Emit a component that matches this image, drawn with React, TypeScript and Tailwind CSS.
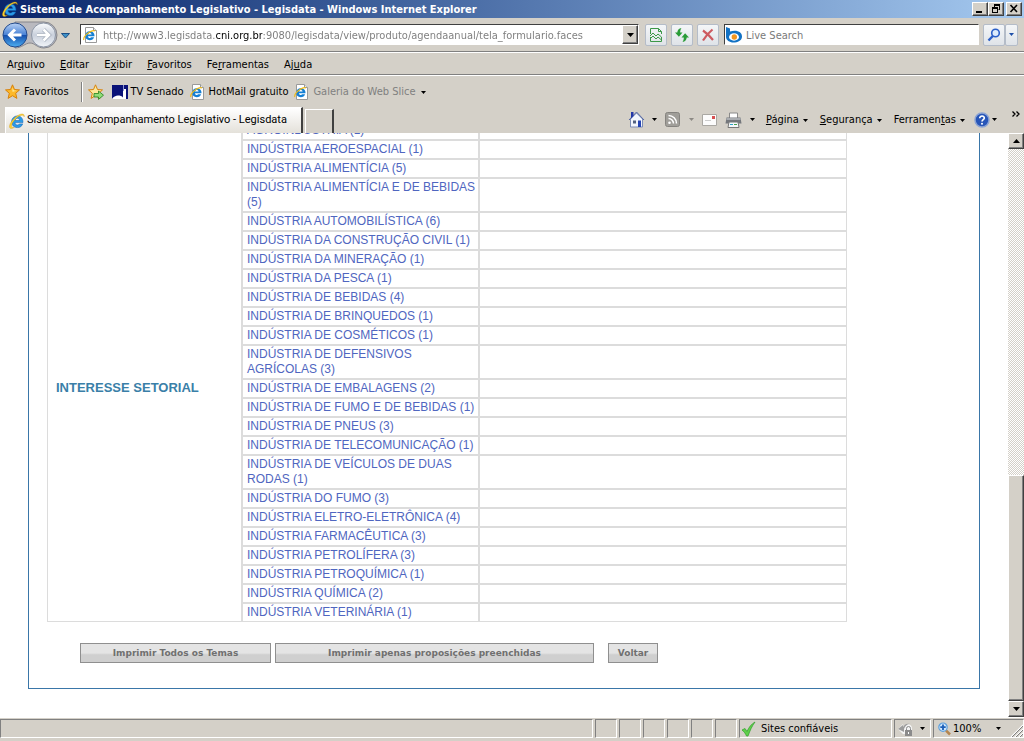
import type { ReactNode } from "react";

const sectors = [
  "AGROINDÚSTRIA (1)",
  "INDÚSTRIA AEROESPACIAL (1)",
  "INDÚSTRIA ALIMENTÍCIA (5)",
  "INDÚSTRIA ALIMENTÍCIA E DE BEBIDAS (5)",
  "INDÚSTRIA AUTOMOBILÍSTICA (6)",
  "INDÚSTRIA DA CONSTRUÇÃO CIVIL (1)",
  "INDÚSTRIA DA MINERAÇÃO (1)",
  "INDÚSTRIA DA PESCA (1)",
  "INDÚSTRIA DE BEBIDAS (4)",
  "INDÚSTRIA DE BRINQUEDOS (1)",
  "INDÚSTRIA DE COSMÉTICOS (1)",
  "INDÚSTRIA DE DEFENSIVOS AGRÍCOLAS (3)",
  "INDÚSTRIA DE EMBALAGENS (2)",
  "INDÚSTRIA DE FUMO E DE BEBIDAS (1)",
  "INDÚSTRIA DE PNEUS (3)",
  "INDÚSTRIA DE TELECOMUNICAÇÃO (1)",
  "INDÚSTRIA DE VEÍCULOS DE DUAS RODAS (1)",
  "INDÚSTRIA DO FUMO (3)",
  "INDÚSTRIA ELETRO-ELETRÔNICA (4)",
  "INDÚSTRIA FARMACÊUTICA (3)",
  "INDÚSTRIA PETROLÍFERA (3)",
  "INDÚSTRIA PETROQUÍMICA (1)",
  "INDÚSTRIA QUÍMICA (2)",
  "INDÚSTRIA VETERINÁRIA (1)",
];

const raised =
  "border border-t-white border-l-white border-r-[#404040] border-b-[#404040] bg-[#d4d0c8] shadow-[inset_-1px_-1px_0_#808080]";
const toolButton =
  "flex h-[22px] w-[22px] items-center justify-center rounded-[2px] border border-[#b4bcc8] bg-linear-to-b from-[#f4f6f8] to-[#dfe3e8]";
const pageButton =
  "h-5 border border-[#8f8f8f] bg-linear-to-b from-[#e4e4e4] from-50% to-[#cfcfcf] to-60% text-center font-['DejaVu_Sans',sans-serif] text-[9px] leading-[16px] font-bold text-[#707070]";

function IELogo({ size = 16 }: { size?: number }) {
  return (
    <svg width={size} height={size} viewBox="0 0 16 16" className="shrink-0" aria-hidden="true">
      <path
        d="M14 9.600H6c.1 1.600 1 2.400 2.400 2.400.9 0 1.600-.4 2-1.100h3.300C12.900 13.300 11 14.600 8.300 14.600 5 14.600 2.600 12.200 2.600 8.800 2.600 5.300 5.100 2.900 8.400 2.900c3.500 0 5.700 2.400 5.600 6.700zM6.100 7.500h4.500C10.400 6.100 9.600 5.300 8.400 5.300S6.300 6.100 6.100 7.500z"
        fill="#2b9be8"
        stroke="#0d5cae"
        strokeWidth=".5"
      />
      <path
        d="M15.200 3.800C15.800.9 13.200.2 9.800 1.900 5 4.300.9 9.700.5 13.100c-.3 3 2.200 2.900 5 1.200-2.300.6-3.300-.3-2.900-2.100C3.200 9.200 6.900 5 10.400 3.100c2.300-1.200 4.100-1.100 4.800.7z"
        fill="#fbd02e"
        stroke="#c88a00"
        strokeWidth=".3"
      />
    </svg>
  );
}

function IEPage() {
  return (
    <svg width="16" height="16" viewBox="0 0 16 16" className="shrink-0" aria-hidden="true">
      <path d="M2.500.5h8l3 3v12h-11z" fill="#fff" stroke="#9a9a9a" />
      <path d="M10.500.5v3h3" fill="#e8e8e8" stroke="#9a9a9a" />
      <path
        d="M11.500 9.200H5c.1 1.200.7 1.800 1.700 1.800.7 0 1.200-.3 1.500-.8h2.900c-.6 1.900-2.100 3-4.400 3-2.700 0-4.500-1.800-4.500-4.400S4 4.200 6.700 4.200C9.600 4.200 11.600 6 11.500 9.200zM5 7.500h3.600C8.500 6.500 7.700 6 6.800 6S5.200 6.500 5 7.500z"
        fill="#147fd4"
      />
      <path d="M11.800 4.200C11.200 2.800 8 4 5.300 6 2.200 8.300.3 11.200.8 13" fill="none" stroke="#eebb1c" strokeWidth="1.200" />
    </svg>
  );
}

function Caret({ light = false, className = "" }: { light?: boolean; className?: string }) {
  return (
    <svg width="5" height="3" viewBox="0 0 5 3" className={`shrink-0 ${className}`} aria-hidden="true">
      <path d="M0 0h5L2.500 3z" fill={light ? "#8c8984" : "#000"} />
    </svg>
  );
}

function Star({ add = false }: { add?: boolean }) {
  return (
    <svg width="16" height="16" viewBox="0 0 16 16" className="shrink-0" aria-hidden="true">
      <path
        d="M7.500.8l2 4.700 5 .4-3.800 3.400 1.200 5.100-4.400-2.700-4.400 2.700 1.200-5.100L.5 5.900l5-.4z"
        fill={add ? "#fbe89a" : "#fdb92a"}
        stroke="#d8820c"
      />
      {!add && <path d="M7.500 3.500l1.200 3 3 .3-4.200 1z" fill="#fff0a8" />}
      {add && <path d="M6 9.500h4.500V7l5 4.200-5 4.200V13H6z" fill="#8fdd78" stroke="#23801c" strokeWidth=".8" />}
    </svg>
  );
}

function TitleBar() {
  return (
    <header className="flex h-[18px] shrink-0 items-center bg-linear-to-r from-[#0a246a] to-[#a6caf0] pr-[2px] pl-[2px]">
      <IELogo />
      <h1 className="ml-[2px] flex-1 truncate pt-[2px] text-[11px] leading-[14px] font-bold text-white">
        Sistema de Acompanhamento Legislativo - Legisdata - Windows Internet Explorer
      </h1>
      <button aria-label="Minimizar" className={`flex h-[14px] w-4 justify-center ${raised}`}>
        <svg width="12" height="12" viewBox="0 0 12 12"><path d="M2 8h6v2H2z" /></svg>
      </button>
      <button aria-label="Restaurar" className={`flex h-[14px] w-4 justify-center ${raised}`}>
        <svg width="12" height="12" viewBox="0 0 12 12">
          <path d="M4 1h6v6H8.500V6H9V3H5v1H4zM2 4h6v6H2zM3 6v3h4V6z" fillRule="evenodd" />
        </svg>
      </button>
      <button aria-label="Fechar" className={`ml-[2px] flex h-[14px] w-4 justify-center ${raised}`}>
        <svg width="12" height="12" viewBox="0 0 12 12">
          <path d="M2.500 2l6.500 7M9 2L2.500 9" stroke="#000" strokeWidth="1.600" />
        </svg>
      </button>
    </header>
  );
}

function NavButtons() {
  return (
    <div className="relative flex h-7 w-[72px] shrink-0 items-center">
      <svg width="72" height="30" viewBox="0 0 72 30" className="shrink-0" aria-hidden="true">
        <defs>
          <linearGradient id="back" x1="0" y1="0" x2="0" y2="1">
            <stop offset="0" stopColor="#b9d2f5" />
            <stop offset=".48" stopColor="#4a83d6" />
            <stop offset=".52" stopColor="#1550ae" />
            <stop offset="1" stopColor="#4fb0f2" />
          </linearGradient>
          <linearGradient id="fwd" x1="0" y1="0" x2="0" y2="1">
            <stop offset="0" stopColor="#fbfcfe" />
            <stop offset=".5" stopColor="#c9d0dc" />
            <stop offset="1" stopColor="#f2f5f9" />
          </linearGradient>
        </defs>
        <path d="M15 2h29a12.500 12.500 0 0 1 0 26c-7 0-9-5-14-5s-8 5-15 5z" fill="#b9b9bf" stroke="#86868c" />
        <circle cx="15" cy="15" r="12" fill="url(#back)" stroke="#244b8c" />
        <circle cx="43.500" cy="15" r="12" fill="url(#fwd)" stroke="#8b95a5" />
        <path d="M21.500 15H10M15 9.500L9.500 15l5.500 5.500" fill="none" stroke="#fff" strokeWidth="3" />
        <path d="M37 15h11.500M43.500 9.500L49 15l-5.500 5.500" fill="none" stroke="#a3acba" strokeWidth="4" />
        <path d="M37 15h11.500M43.500 9.500L49 15l-5.500 5.500" fill="none" stroke="#fff" strokeWidth="2.600" />
        <path d="M61.500 13.500h8l-4 4.500z" fill="#3d91c8" stroke="#1c4f86" />
      </svg>
      <button aria-label="Voltar à página anterior" className="absolute left-0 h-7 w-7 rounded-full" />
      <button aria-label="Avançar" className="absolute left-[30px] h-7 w-7 rounded-full" />
    </div>
  );
}

function AddressBar() {
  return (
    <div className="flex h-[34px] shrink-0 items-center border-b border-[#808080] pr-[6px]">
      <NavButtons />
      <div className="ml-2 flex h-[21px] flex-1 items-center border border-t-[#404040] border-r-white border-b-white border-l-[#404040] bg-white pl-[2px]">
        <IEPage />
        <input
          aria-label="Endereço"
          readOnly
          value="http://www3.legisdata.cni.org.br:9080/legisdata/view/produto/agendaanual/tela_formulario.faces"
          className="ml-1 h-[18px] min-w-0 flex-1 bg-[linear-gradient(to_right,#7a7a7a_113px,#000_113px,#000_159px,#7a7a7a_159px)] bg-clip-text pt-[2px] text-[11px] text-transparent outline-none"
        />
        <button aria-label="Mostrar endereços" className={`flex h-[19px] w-4 items-center justify-center ${raised}`}>
          <svg width="7" height="4" viewBox="0 0 7 4"><path d="M0 0h7L3.500 4z" /></svg>
        </button>
      </div>
      <div className="ml-[6px] flex gap-1">
        <button aria-label="Modo de compatibilidade" className={toolButton}>
          <svg width="14" height="16" viewBox="0 0 14 16" fill="none" stroke="#3c9848">
            <path d="M1.500 7V1.500h8l3 3V7M9.500 1.500v3h3M1.500 10v4.500h11V10" />
            <path d="M1 9l3-3 3 3 2-2 3.500 3M1 12l3-3 3 3 2-2 3.500 3" />
          </svg>
        </button>
        <button aria-label="Atualizar" className={toolButton}>
          <svg width="16" height="16" viewBox="0 0 16 16" fill="#2a9c38">
            <path d="M7.500 1C4.900 1.500 3.300 3.300 3.300 5.500H1l3.900 4.300L8.500 5.500H6.200C6.200 4 6.500 2.300 7.500 1zM8.500 15c2.600-.5 4.200-2.300 4.200-4.500H15l-3.900-4.300-3.600 4.300h2.300c0 1.500-.3 3.200-1.300 4.500z" />
          </svg>
        </button>
        <button aria-label="Parar" className={toolButton}>
          <svg width="14" height="14" viewBox="0 0 14 14" fill="none">
            <path d="M2 2.500Q7 6 12 12M11.500 1.500Q6 6 2 12.500" stroke="#cd5a60" strokeWidth="2.200" />
          </svg>
        </button>
      </div>
      <div className="ml-[5px] flex h-[21px] w-[255px] items-center border border-t-[#404040] border-r-white border-b-white border-l-[#404040] bg-white">
        <svg width="18" height="18" viewBox="0 0 18 18" className="shrink-0" aria-hidden="true">
          <path d="M1 1l4 1.500v3c7-2 12 .5 12 5 0 4-4.500 6-8.500 6C4.500 16.500 1 14 1 11z" fill="#1272c4" />
          <ellipse cx="9" cy="11" rx="5" ry="3.700" fill="#fff" />
          <circle cx="9.300" cy="11" r="2.700" fill="#f5961d" />
        </svg>
        <input
          aria-label="Live Search"
          placeholder="Live Search"
          className="ml-[3px] h-[18px] min-w-0 flex-1 pt-[2px] text-[11px] outline-none placeholder:text-[#7a7a7a]"
        />
      </div>
      <button aria-label="Pesquisar" className={`ml-1 ${toolButton}`}>
        <svg width="14" height="14" viewBox="0 0 14 14" fill="none" stroke="#2b5fc8">
          <circle cx="8.500" cy="5" r="3.800" strokeWidth="1.600" fill="#dcebfc" />
          <path d="M5.800 8L1.500 12.500" strokeWidth="2.400" />
        </svg>
      </button>
      <button
        aria-label="Opções de pesquisa"
        className="flex h-[22px] w-[13px] items-center justify-center rounded-[2px] border border-[#b4bcc8] bg-linear-to-b from-[#f4f6f8] to-[#dfe3e8]"
      >
        <svg width="5" height="3" viewBox="0 0 5 3"><path d="M0 0h5L2.500 3z" fill="#1f4fa8" /></svg>
      </button>
    </div>
  );
}

const menus: [string, string, string][] = [
  ["Ar", "q", "uivo"],
  ["", "E", "ditar"],
  ["E", "x", "ibir"],
  ["", "F", "avoritos"],
  ["Fe", "r", "ramentas"],
  ["Aj", "u", "da"],
];

function MenuBar() {
  return (
    <nav className="flex h-[23px] shrink-0 items-center gap-[15px] border-t border-b border-t-white border-b-[#808080] pt-[2px] pl-[7px]">
      {menus.map(([before, key, after]) => (
        <button key={before + key} className="leading-[15px]">
          {before}
          <u>{key}</u>
          {after}
        </button>
      ))}
    </nav>
  );
}

function FavoritesBar() {
  return (
    <div className="flex h-[31px] shrink-0 items-center border-t border-white pt-[2px] pl-[5px]">
      <button className="flex items-center gap-[3px]">
        <Star />
        Favoritos
      </button>
      <span className="ml-3 h-5 w-[2px] border-l border-[#808080] bg-white" />
      <button aria-label="Adicionar à barra de favoritos" className="ml-[5px]">
        <Star add />
      </button>
      <a href="#tv" className="ml-2 flex items-center gap-[3px]">
        <svg width="16" height="16" viewBox="0 0 16 16" aria-hidden="true">
          <path d="M0 1h16v14H0z" fill="#0a1278" />
          <path d="M0 15c1-2 4-3.500 6-3.500s4 .5 5 2V5h3v10z" fill="#fff" />
          <path d="M11 1h1v6h-1z" fill="#8f98d6" />
        </svg>
        TV Senado
      </a>
      <a href="#hotmail" className="ml-[6px] flex items-center gap-[3px]">
        <IEPage />
        HotMail gratuito
      </a>
      <button className="ml-[6px] flex items-center gap-[3px] text-[#808080]">
        <IEPage />
        Galeria do Web Slice
        <Caret className="ml-[2px]" />
      </button>
    </div>
  );
}

function Command({ children }: { children: ReactNode }) {
  return <button className="flex items-center gap-1 pt-px">{children}</button>;
}

function TabBar() {
  return (
    <div className="flex h-[27px] shrink-0 items-end pr-[3px] pl-[5px]">
      <button className="flex h-[26px] w-[298px] items-center gap-[2px] border-t border-r-2 border-l border-t-white border-r-[#404040] border-l-white bg-linear-to-b from-white to-[#e4e1da] pl-[3px] font-[Roboto,sans-serif]">
        <IELogo />
        Sistema de Acompanhamento Legislativo - Legisdata
      </button>
      <button aria-label="Nova guia" className="ml-[2px] h-6 w-[29px] border-t border-r-2 border-l border-t-white border-r-[#404040] border-l-white" />
      <div className="flex flex-1 items-center justify-end self-center">
        <button aria-label="Página inicial" className="flex items-center gap-[7px]">
          <svg width="17" height="17" viewBox="0 0 17 17">
            <path d="M2.500 8v8h12V8l-6-6z" fill="#f3f6fc" stroke="#7c8db5" />
            <path d="M1 9l7.500-8L16 9" fill="none" stroke="#5265a4" />
            <path d="M3 1h2.500v4L3 7.500z" fill="#2438a8" />
            <path d="M10 9.500h3V16h-3z" fill="#2645b4" />
            <path d="M5 9.500h3v3H5z" fill="#53627f" />
          </svg>
          <Caret />
        </button>
        <button aria-label="Feeds" className="ml-[8px] flex items-center gap-[9px]">
          <svg width="15" height="15" viewBox="0 0 15 15">
            <rect x=".5" y=".5" width="14" height="14" rx="2" fill="#a09e99" stroke="#85837f" />
            <path d="M3.500 6.500a5 5 0 0 1 5 5M3.500 3.500a8 8 0 0 1 8 8" fill="none" stroke="#fff" strokeWidth="1.500" />
            <circle cx="4.500" cy="10.700" r="1.300" fill="#fff" />
          </svg>
          <Caret light />
        </button>
        <button aria-label="Ler email" className="ml-2">
          <svg width="15" height="12" viewBox="0 0 15 12">
            <path d="M.5.5h14v11H.5z" fill="#fcfcfc" stroke="#aaa8a3" />
            <path d="M10 2h3v3h-3z" fill="#d85050" />
            <path d="M3 6.500h6" stroke="#ccc" />
          </svg>
        </button>
        <button aria-label="Imprimir" className="ml-2 flex items-center gap-2">
          <svg width="17" height="16" viewBox="0 0 17 16">
            <path d="M4.500 6V1h8v5" fill="#fff" stroke="#8a8a8a" />
            <path d="M1.500 5.500h14l1 6h-16z" fill="#74777c" />
            <path d="M1.500 6h14v2h-14z" fill="#a9acb0" />
            <path d="M4 10h9l1 5.500H3z" fill="#f5f8fa" stroke="#777" />
            <path d="M5 12.500h3" stroke="#2ba0c8" />
            <path d="M9 12.500h3" stroke="#44a04e" />
          </svg>
          <Caret />
        </button>
        <div className="ml-[11px] flex items-center gap-3">
          <Command>
            <span><u>P</u>ágina</span>
            <Caret />
          </Command>
          <Command>
            <span><u>S</u>egurança</span>
            <Caret />
          </Command>
          <Command>
            <span>Ferramen<u>t</u>as</span>
            <Caret />
          </Command>
        </div>
        <button aria-label="Ajuda" className="ml-[9px] flex items-center gap-[2px]">
          <svg width="16" height="16" viewBox="0 0 16 16">
            <circle cx="8" cy="8" r="7" fill="#2755b8" stroke="#8ba3d4" strokeWidth="1.500" />
            <path d="M5.700 6.200c0-3 4.800-2.800 4.600-.1C10.200 7.700 8 7.700 8 9.600" fill="none" stroke="#fff" strokeWidth="1.600" />
            <circle cx="8" cy="11.800" r="1" fill="#fff" />
          </svg>
          <Caret />
        </button>
        <button aria-label="Mais comandos" className="mb-3 ml-[15px]">
          <svg width="9" height="6" viewBox="0 0 9 6" fill="none" stroke="#000" strokeWidth="1.300">
            <path d="M.5.5L3 3 .5 5.500M4.500.5L7 3 4.500 5.500" />
          </svg>
        </button>
      </div>
    </div>
  );
}

function SectorTable() {
  return (
    <table className="w-[800px] table-fixed border-separate border-spacing-0 font-['Liberation_Sans',sans-serif] text-[12px] leading-[15px]">
      <colgroup>
        <col className="w-[195px]" />
        <col className="w-[237px]" />
        <col />
      </colgroup>
      <tbody>
        {sectors.map((sector, i) => (
          <tr key={sector}>
            {i === 0 && (
              <th
                scope="rowgroup"
                rowSpan={sectors.length}
                className="border border-[#dcdcdc] px-2 pt-8 text-left align-middle text-[13px] font-bold text-[#3a7fa8]"
              >
                INTERESSE SETORIAL
              </th>
            )}
            <td className="border border-[#dcdcdc] py-px pr-0 pl-1">
              <a href="#setor" className="text-[#4f66c0]">{sector}</a>
            </td>
            <td className="border border-[#dcdcdc]" />
          </tr>
        ))}
      </tbody>
    </table>
  );
}

function ScrollBar() {
  return (
    <div className="flex w-4 shrink-0 flex-col bg-[repeating-conic-gradient(#fff_0_25%,#d4d0c8_0_50%)] bg-size-[2px_2px]">
      <button aria-label="Rolar para cima" className={`flex h-4 items-center justify-center ${raised}`}>
        <svg width="7" height="4" viewBox="0 0 7 4"><path d="M0 4h7L3.500 0z" /></svg>
      </button>
      <div className="grow-[327]" />
      <div className={`grow-[225] ${raised}`} />
      <button aria-label="Rolar para baixo" className={`flex h-4 items-center justify-center ${raised}`}>
        <svg width="7" height="4" viewBox="0 0 7 4"><path d="M0 0h7L3.500 4z" /></svg>
      </button>
    </div>
  );
}

const pane = "h-[19px] border border-t-[#808080] border-r-white border-b-white border-l-[#808080]";

function StatusBar() {
  return (
    <footer className="flex h-6 shrink-0 gap-[2px] border-t border-white pt-px">
      <div className={`flex-1 ${pane}`} />
      {[0, 1, 2, 3, 4, 5].map((n) => (
        <div key={n} className={`w-[22px] ${pane}`} />
      ))}
      <div className={`flex w-[153px] items-center gap-[5px] pl-px ${pane}`}>
        <svg width="15" height="16" viewBox="0 0 15 16" aria-hidden="true">
          <path d="M1 9l3-1.500 2 3C8 6 10.500 3 14 1c-3 4-5 8.500-7 14H5.500C4.500 12.500 3 10.500 1 9z" fill="#5fd04a" stroke="#3aa534" strokeWidth=".8" />
        </svg>
        <span className="pt-px">Sites confiáveis</span>
      </div>
      <button aria-label="Modo protegido" className={`flex w-[37px] items-center justify-between pr-[5px] pl-[2px] ${pane}`}>
        <svg width="17" height="16" viewBox="0 0 17 16">
          <path d="M1 8l5-5v2.500c3-4 8-3 9 1V13H6z" fill="#f4f4f4" />
          <path d="M1 8l5-4v2c1.500-3 4-4 7-3-3 0-5 2-6 5v3z" fill="#9c9c9c" />
          <path d="M8 9h7v6H8z" fill="#8b8b8b" />
          <path d="M9.500 9V7.500a2 2 0 0 1 4 0V9" fill="none" stroke="#8b8b8b" />
          <path d="M11 11h1v2h-1z" fill="#fff" />
        </svg>
        <Caret />
      </button>
      <button className={`flex w-[91px] items-center pl-1 ${pane}`}>
        <svg width="13" height="14" viewBox="0 0 13 14" aria-hidden="true">
          <path d="M8 8.500l4 4" stroke="#b58650" strokeWidth="2.500" />
          <circle cx="5" cy="5.200" r="4.200" fill="#cfe6fb" stroke="#5d9fdc" strokeWidth="1.200" />
          <path d="M5 2.500V8M2.300 5.200h5.400" stroke="#1c5fb8" strokeWidth="1.800" />
        </svg>
        <span className="ml-[2px] flex-1 pt-px text-left">100%</span>
        <Caret />
        <svg width="13" height="14" viewBox="0 0 13 14" className="ml-[9px] self-end" aria-hidden="true">
          <path d="M1 14L13 2M5 14l8-8M9 14l4-4" stroke="#fff" strokeWidth="1.200" />
          <path d="M2 14L13 3M6 14l7-7M10 14l3-3" stroke="#808080" />
        </svg>
      </button>
    </footer>
  );
}

export default function App() {
  return (
    <div className="flex h-screen flex-col overflow-hidden bg-[#d4d0c8] font-['DejaVu_Sans_Condensed','DejaVu_Sans',sans-serif] text-[11px] whitespace-nowrap text-black">
      <TitleBar />
      <AddressBar />
      <MenuBar />
      <FavoritesBar />
      <TabBar />
      <div className="flex min-h-0 flex-1">
        <main className="flex min-w-0 flex-1 flex-col justify-end overflow-hidden bg-white pb-7 whitespace-normal">
          <div className="mr-7 ml-7 border border-[#3a76a8] pt-10 pb-[25px] pl-[18px]">
            <SectorTable />
            <div className="mt-[21px] flex pl-[33px]">
              <button className={`w-[191px] ${pageButton}`}>Imprimir Todos os Temas</button>
              <button className={`ml-1 w-[319px] ${pageButton}`}>Imprimir apenas proposições preenchidas</button>
              <button className={`ml-[14px] w-[50px] ${pageButton}`}>Voltar</button>
            </div>
          </div>
        </main>
        <ScrollBar />
      </div>
      <StatusBar />
    </div>
  );
}
